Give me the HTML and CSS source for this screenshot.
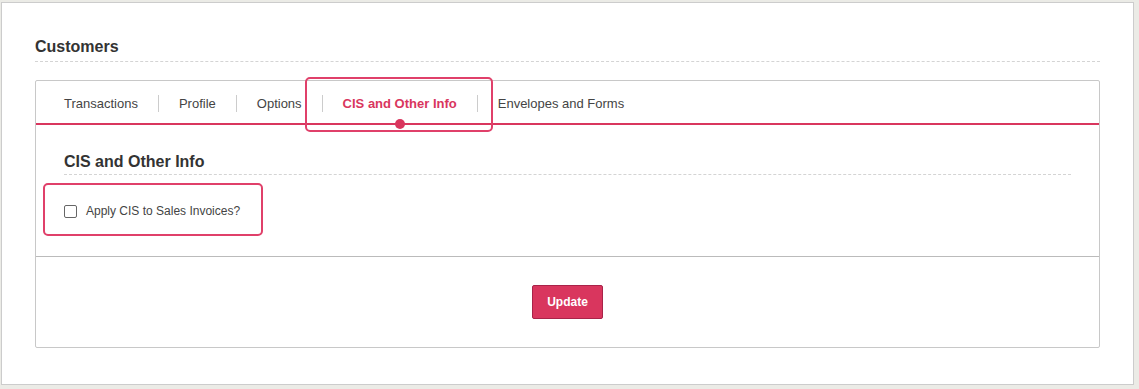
FILE: index.html
```html
<!DOCTYPE html>
<html lang="en">

<head>
    <meta charset="UTF-8">
    <meta name="viewport" content="width=device-width, initial-scale=1.0">
    <title>Customers - CIS and Other Info</title>
    <link rel="stylesheet" href="styles.css">
</head>

<body>
    <div class="panel">
        <h2 class="page-title">Customers</h2>

        <div class="tab-box">
            <div class="tab-bar">
                <a class="tab">Transactions</a>
                <span class="tab-sep"></span>
                <a class="tab">Profile</a>
                <span class="tab-sep"></span>
                <a class="tab">Options</a>
                <span class="tab-sep"></span>
                <a class="tab active">CIS and Other Info</a>
                <span class="tab-sep"></span>
                <a class="tab">Envelopes and Forms</a>
            </div>

            <div class="tab-content">
                <h3 class="section-title">CIS and Other Info</h3>
                <label class="check-row">
                    <input type="checkbox" id="apply-cis">
                    <span>Apply CIS to Sales Invoices?</span>
                </label>
            </div>

            <div class="tab-footer">
                <button class="btn-update">Update</button>
            </div>
        </div>
    </div>
</body>

</html>
```

FILE: styles.css
```css
body {
    font-family: "Liberation Sans", Arial, sans-serif;
    margin: 0;
    padding: 0;
    background: #ebebe6;
    color: #333;
}

.panel {
    width: 1133px;
    margin: 2px 0 0 1px;
    padding: 34px 33px 36px 33px;
    box-sizing: border-box;
    background: #fff;
    border: 1px solid #ccc;
}

.page-title {
    margin: 0 0 18px 0;
    padding-bottom: 4px;
    font-size: 16px;
    line-height: 20px;
    font-weight: bold;
    color: #333;
    border-bottom: 1px dashed #d4d4d4;
}

.tab-box {
    border: 1px solid #c8c8c8;
    border-radius: 2px;
}

/* tabs */
.tab-bar {
    display: flex;
    align-items: center;
    height: 42px;
    padding-left: 8px;
    border-bottom: 2px solid #d9365e;
}

.tab {
    position: relative;
    display: flex;
    align-items: center;
    height: 100%;
    box-sizing: border-box;
    padding: 2px 20px 0 20px;
    font-size: 13px;
    color: #444;
    cursor: pointer;
}

.tab-sep {
    width: 1px;
    height: 17px;
    margin-top: 3px;
    background: #ccc;
}

.tab.active {
    color: #d9365e;
    font-weight: bold;
}

.tab.active::before {
    content: "";
    position: absolute;
    top: -4px;
    bottom: -9px;
    left: -18px;
    right: -16px;
    border: 2px solid #e0406a;
    border-radius: 5px;
    pointer-events: none;
}

.tab.active::after {
    content: "";
    position: absolute;
    left: 50%;
    bottom: -6px;
    width: 10px;
    height: 10px;
    margin-left: -5px;
    border-radius: 50%;
    background: #d9365e;
}

/* content */
.tab-content {
    padding: 27px 28px 37px 28px;
}

.section-title {
    margin: 0 0 28px 0;
    padding-bottom: 2px;
    font-size: 16px;
    line-height: 20px;
    font-weight: bold;
    color: #333;
    border-bottom: 1px dashed #d4d4d4;
}

.check-row {
    position: relative;
    display: flex;
    width: fit-content;
    align-items: center;
    height: 16px;
    font-size: 12px;
    color: #444;
}

.check-row input {
    appearance: none;
    -webkit-appearance: none;
    width: 13px;
    height: 13px;
    margin: 0 9px 0 0;
    border: 1px solid #666;
    border-radius: 2px;
    background: #fff;
}

.check-row::after {
    content: "";
    position: absolute;
    top: -20px;
    bottom: -17px;
    left: -21px;
    right: -23px;
    border: 2px solid #e0406a;
    border-radius: 5px;
    pointer-events: none;
}

.tab-footer {
    display: flex;
    justify-content: center;
    padding: 28px 0;
    border-top: 1px solid #bbb;
}

.btn-update {
    height: 34px;
    padding: 0 14px;
    border: 1px solid #a92349;
    border-radius: 2px;
    background-color: #d9365e;
    color: #fff;
    font-family: "Liberation Sans", Arial, sans-serif;
    font-size: 12px;
    font-weight: bold;
    cursor: pointer;
}
```
